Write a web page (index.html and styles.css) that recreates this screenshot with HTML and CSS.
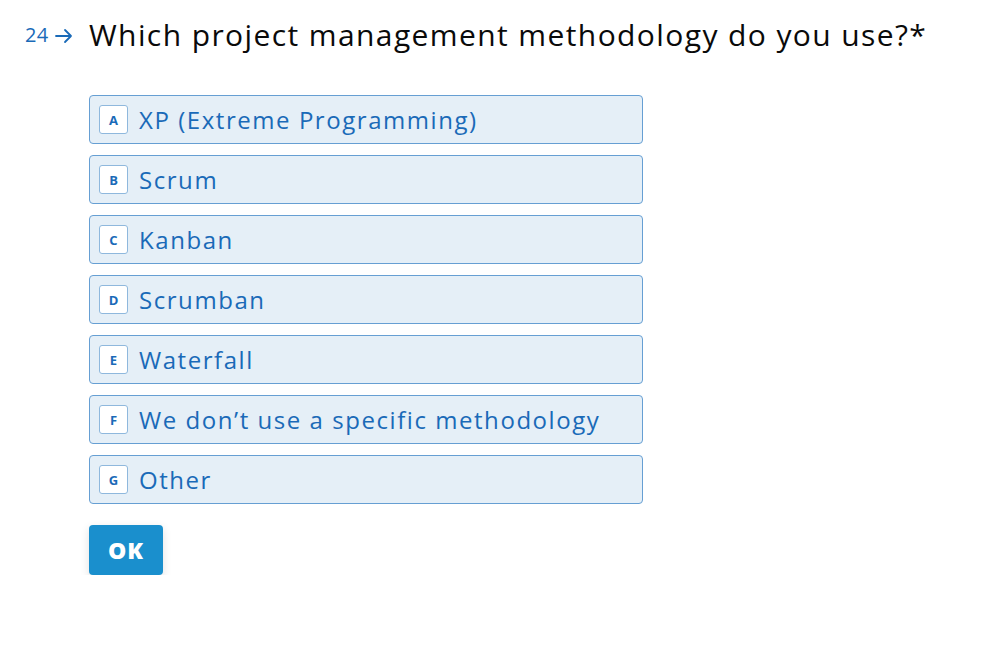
FILE: index.html
```html
<!DOCTYPE html>
<html>
<head>
<meta charset="utf-8">
<link rel="stylesheet" href="styles.css">
</head>
<body>
<div class="page">
  <div class="qrow">
    <div class="prefix">
      <span class="num">24</span>
      <svg class="arrow" width="18" height="16" viewBox="0 0 18 16"><path d="M1 8 H16 M10 2 L16 8 L10 14" fill="none" stroke="#1a6ab8" stroke-width="1.8" stroke-linecap="round" stroke-linejoin="round"/></svg>
    </div>
    <h1 class="question">Which project management methodology do you use?*</h1>
  </div>
  <div class="options">
    <div class="option"><span class="key">A</span><span class="label">XP (Extreme Programming)</span></div>
    <div class="option"><span class="key">B</span><span class="label">Scrum</span></div>
    <div class="option"><span class="key">C</span><span class="label">Kanban</span></div>
    <div class="option"><span class="key">D</span><span class="label">Scrumban</span></div>
    <div class="option"><span class="key">E</span><span class="label">Waterfall</span></div>
    <div class="option"><span class="key">F</span><span class="label">We don’t use a specific methodology</span></div>
    <div class="option"><span class="key">G</span><span class="label">Other</span></div>
  </div>
  <button class="ok">OK</button>
</div>
</body>
</html>
```

FILE: styles.css
```css
* { box-sizing: border-box; }
html, body { margin: 0; padding: 0; background: #fff; }
body { font-family: "Open Sans", "Noto Sans", sans-serif; }
.page { padding: 15px 0 0 25px; }
.qrow { display: flex; align-items: center; height: 40px; }
.prefix { width: 64px; display: flex; align-items: center; gap: 7px; color: #1a6ab8; }
.num { font-size: 20px; line-height: 1; letter-spacing: 0.3px; }
.arrow { display: block; margin-top: 1px; }
.question { margin: 0; font-weight: 400; font-size: 30px; line-height: 40px; color: #0a0a0a; letter-spacing: 1.4px; }
.options { margin: 40px 0 0 64px; width: 554px; display: flex; flex-direction: column; gap: 11px; }
.option { height: 49px; border: 1px solid #669fd3; border-radius: 4px; background: #e5eff7; display: flex; align-items: center; padding-left: 9px; gap: 11px; }
.key { width: 29px; height: 29px; border: 1px solid #8fb8dd; border-radius: 3px; background: #fff; display: flex; align-items: center; justify-content: center; font-size: 13px; font-weight: 700; color: #1a6ab8; }
.label { font-size: 24px; color: #1a6ab8; letter-spacing: 1.55px; }
.ok { margin: 21px 0 0 64px; width: 74px; height: 50px; border: none; border-radius: 4px; background: #1a8fcd; color: #fff; font-family: inherit; font-weight: 800; font-size: 23px; letter-spacing: 1px; box-shadow: 0 3px 10px rgba(0,0,0,0.12); padding: 0; }
```
